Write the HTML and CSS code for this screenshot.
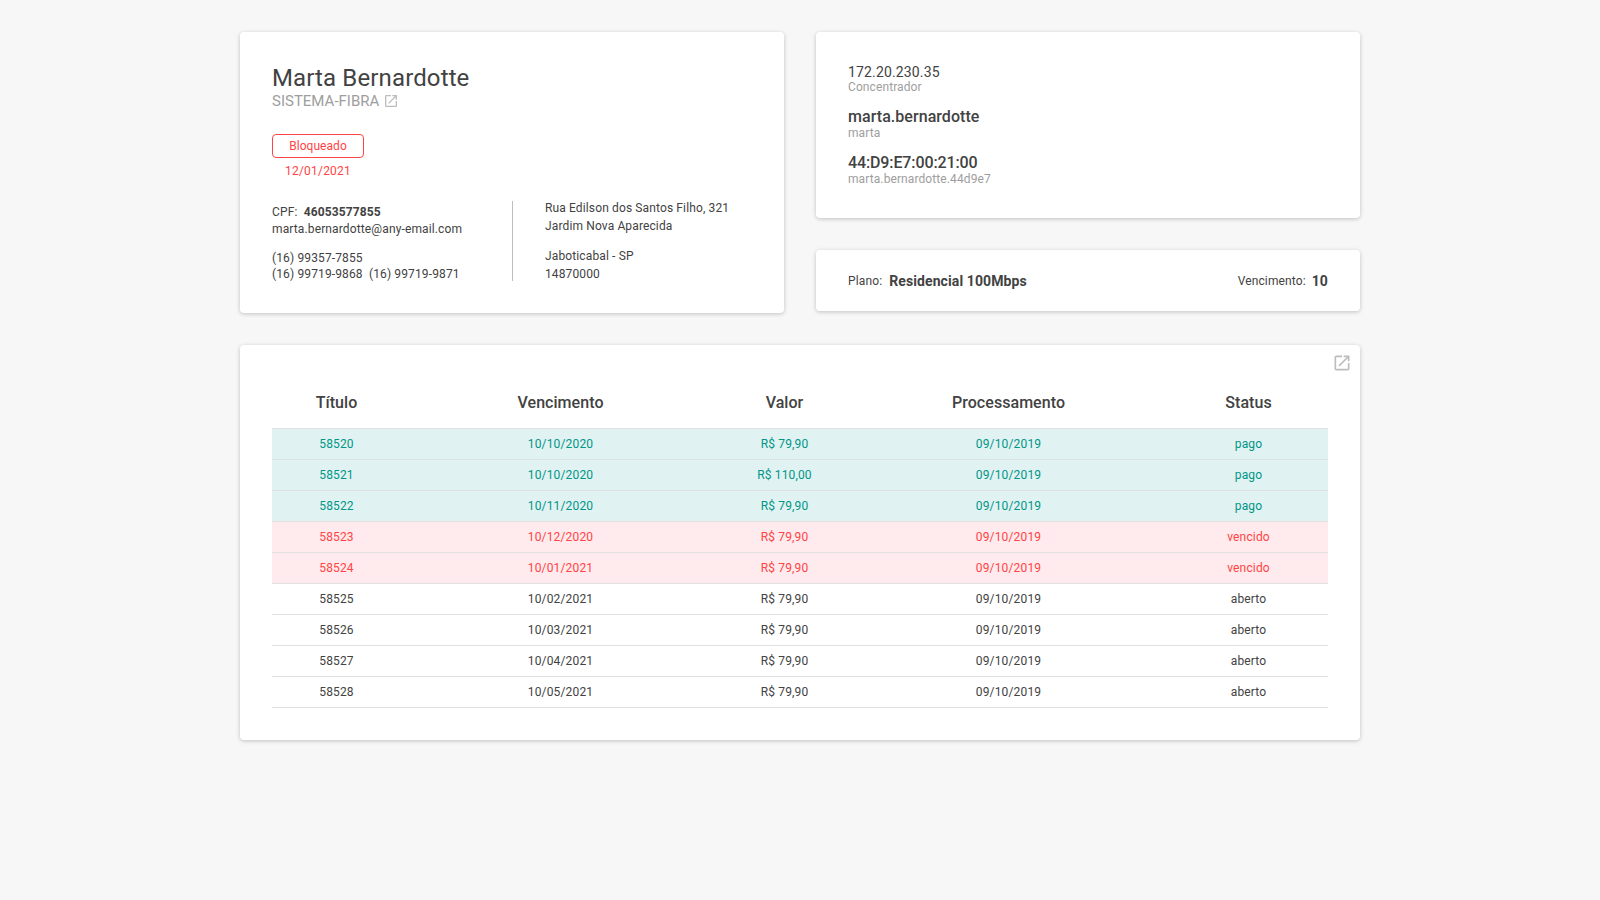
FILE: index.html
```html
<!DOCTYPE html>
<html lang="pt-BR">
<head>
<meta charset="utf-8">
<title>Marta Bernardotte</title>
<link rel="stylesheet" href="styles.css">
</head>
<body>
<main class="page">
  <section class="top">
    <article class="card client">
      <h1 class="name">Marta Bernardotte</h1>
      <div class="system">SISTEMA-FIBRA
        <svg class="ext ext-small" viewBox="0 0 24 24"><path d="M19 19H5V5h7V3H5a2 2 0 0 0-2 2v14a2 2 0 0 0 2 2h14a2 2 0 0 0 2-2v-7h-2v7zM14 3v2h3.59l-9.83 9.83 1.41 1.41L19 6.41V10h2V3h-7z"/></svg>
      </div>
      <div class="state">
        <div class="badge">Bloqueado</div>
        <div class="state-date">12/01/2021</div>
      </div>
      <div class="details">
        <div class="contact">
          <div class="cpf">CPF:&nbsp; <strong>46053577855</strong></div>
          <div class="email">marta.bernardotte@any-email.com</div>
          <div class="phone first">(16) 99357-7855</div>
          <div class="phone">(16) 99719-9868&nbsp; (16) 99719-9871</div>
        </div>
        <div class="address">
          <div class="addr">Rua Edilson dos Santos Filho, 321</div>
          <div class="addr">Jardim Nova Aparecida</div>
          <div class="addr city">Jaboticabal - SP</div>
          <div class="addr">14870000</div>
        </div>
      </div>
    </article>
    <div class="side">
      <article class="card network">
        <div class="info"><div class="val light">172.20.230.35</div><div class="sub">Concentrador</div></div>
        <div class="info"><div class="val">marta.bernardotte</div><div class="sub">marta</div></div>
        <div class="info"><div class="val mac">44:D9:E7:00:21:00</div><div class="sub">marta.bernardotte.44d9e7</div></div>
      </article>
      <article class="card plan">
        <div><span class="label wide">Plano:</span><strong class="plan-val">Residencial 100Mbps</strong></div>
        <div><span class="label">Vencimento:</span><strong class="plan-val">10</strong></div>
      </article>
    </div>
  </section>
  <section class="card bills">
    <svg class="ext ext-corner" viewBox="0 0 24 24"><path d="M19 19H5V5h7V3H5a2 2 0 0 0-2 2v14a2 2 0 0 0 2 2h14a2 2 0 0 0 2-2v-7h-2v7zM14 3v2h3.59l-9.83 9.83 1.41 1.41L19 6.41V10h2V3h-7z"/></svg>
    <table class="table">
      <colgroup><col class="c1"><col class="c2"><col class="c3"><col class="c4"><col class="c5"></colgroup>
      <thead><tr><th>Título</th><th>Vencimento</th><th>Valor</th><th>Processamento</th><th>Status</th></tr></thead>
      <tbody>
        <tr class="paid"><td>58520</td><td>10/10/2020</td><td>R$ 79,90</td><td>09/10/2019</td><td>pago</td></tr>
        <tr class="paid"><td>58521</td><td>10/10/2020</td><td>R$ 110,00</td><td>09/10/2019</td><td>pago</td></tr>
        <tr class="paid"><td>58522</td><td>10/11/2020</td><td>R$ 79,90</td><td>09/10/2019</td><td>pago</td></tr>
        <tr class="late"><td>58523</td><td>10/12/2020</td><td>R$ 79,90</td><td>09/10/2019</td><td>vencido</td></tr>
        <tr class="late"><td>58524</td><td>10/01/2021</td><td>R$ 79,90</td><td>09/10/2019</td><td>vencido</td></tr>
        <tr><td>58525</td><td>10/02/2021</td><td>R$ 79,90</td><td>09/10/2019</td><td>aberto</td></tr>
        <tr><td>58526</td><td>10/03/2021</td><td>R$ 79,90</td><td>09/10/2019</td><td>aberto</td></tr>
        <tr><td>58527</td><td>10/04/2021</td><td>R$ 79,90</td><td>09/10/2019</td><td>aberto</td></tr>
        <tr><td>58528</td><td>10/05/2021</td><td>R$ 79,90</td><td>09/10/2019</td><td>aberto</td></tr>
      </tbody>
    </table>
  </section>
</main>
</body>
</html>
```

FILE: styles.css
```css
* { box-sizing: border-box; }
html, body { margin: 0; height: 100%; }
body {
  background: #f7f7f7;
  color: #424242;
  font-family: Roboto, "Liberation Sans", sans-serif;
  font-size: 12px;
  letter-spacing: 0.13px;
  overflow: hidden;
}
.page {
  width: 1120px;
  margin: 0 auto;
  padding-top: 32px;
  display: flex;
  flex-direction: column;
  gap: 32px;
}
.top { display: flex; gap: 32px; }
.card {
  background: #fff;
  border-radius: 4px;
  box-shadow: 0 1px 4px rgba(0, 0, 0, 0.22);
}
.client { flex: 1; height: 281px; padding: 32px; }
.name { margin: 0; font-size: 24px; font-weight: 400; line-height: 28px; color: #424242; }
.system { display: flex; align-items: center; gap: 4px; font-size: 15px; line-height: 18px; letter-spacing: 0; color: #9e9e9e; }
.ext { fill: #bdbdbd; display: block; }
.ext-small { width: 16px; height: 16px; }
.state { width: 92px; margin-top: 24px; text-align: center; }
.badge { height: 24px; line-height: 22px; border: 1px solid #ff4444; border-radius: 4px; color: #ff4444; letter-spacing: 0.05px; }
.state-date { margin-top: 5px; line-height: 16px; color: #ff4444; letter-spacing: 0.2px; }
.details { display: flex; margin-top: 20px; }
.contact { width: 241px; height: 80px; margin-top: 2px; border-right: 1px solid #bdbdbd; padding-top: 3px; }
.cpf { line-height: 17px; }
.cpf strong { font-weight: 700; }
.email { line-height: 17px; }
.phone { line-height: 16px; }
.phone.first { margin-top: 12px; }
.address { padding-left: 32px; }
.addr { line-height: 18px; }
.addr.city { margin-top: 12px; }
.side { width: 544px; display: flex; flex-direction: column; gap: 32px; }
.network { height: 186px; padding: 32px 32px 0; }
.info { margin-bottom: 13px; }
.val { font-size: 16px; font-weight: 500; line-height: 19px; letter-spacing: 0.05px; }
.val.light { font-size: 14px; font-weight: 400; line-height: 16px; letter-spacing: 0.15px; }
.val.mac { letter-spacing: -0.12px; }
.sub { font-size: 12px; line-height: 14px; color: #9e9e9e; letter-spacing: 0.1px; }
.plan { height: 61px; padding: 0 32px; display: flex; justify-content: space-between; align-items: center; }
.label { margin-right: 6px; vertical-align: 1px; }
.label.wide { margin-right: 7px; }
.plan-val { font-size: 14px; font-weight: 700; letter-spacing: 0.1px; }
.bills { position: relative; height: 395px; padding: 32px; }
.ext-corner { position: absolute; top: 8px; right: 8px; width: 20px; height: 20px; }
.table { width: 1056px; border-collapse: collapse; table-layout: fixed; }
.c1 { width: 128px; }
.c2 { width: 320px; }
.c3 { width: 128px; }
.c4 { width: 320px; }
.c5 { width: 160px; }
th { height: 51px; font-size: 16px; font-weight: 500; text-align: center; letter-spacing: 0.05px; border-bottom: 1px solid #e0e0e0; padding: 0 0 0 1px; }
td { height: 31px; text-align: center; letter-spacing: 0.15px; border-bottom: 1px solid #e0e0e0; padding: 0 0 0 1px; }
.paid { background: #e0f2f1; color: #009688; }
.late { background: #ffebee; color: #ff4444; }
```
